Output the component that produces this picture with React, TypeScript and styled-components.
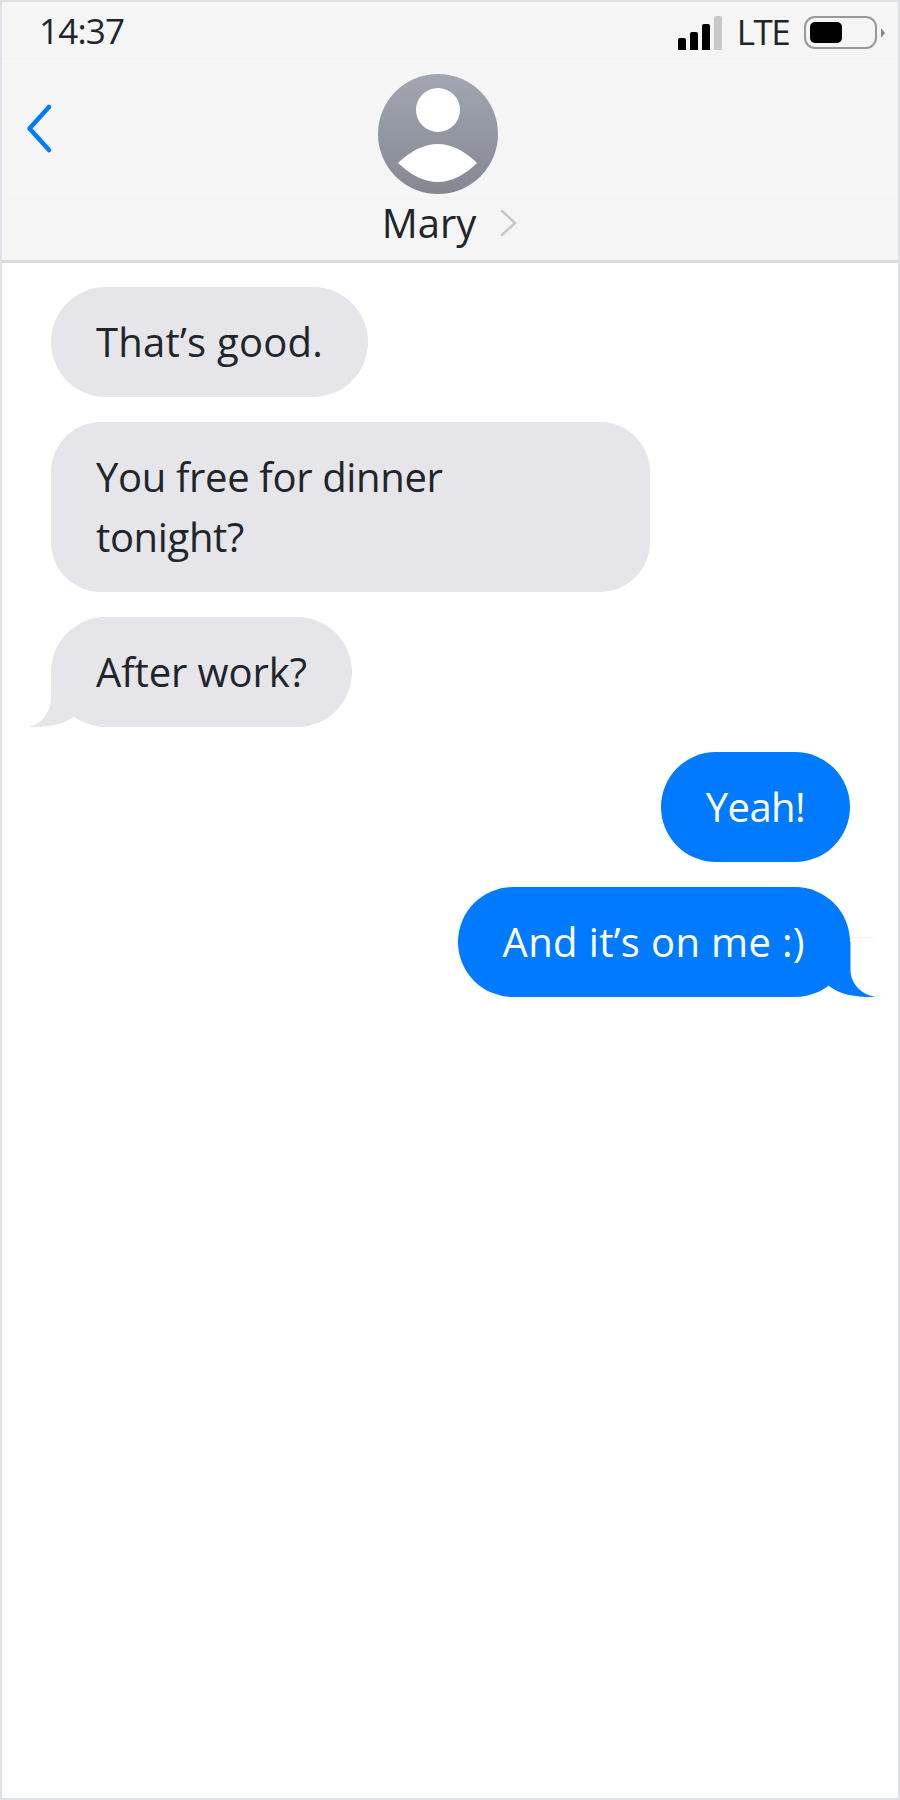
import styled, { createGlobalStyle } from "styled-components";

const GlobalStyle = createGlobalStyle`
  html, body {
    margin: 0;
    padding: 0;
    background: #fff;
  }
  * {
    box-sizing: border-box;
  }
`;

const leftTail =
  "M23 0 L23 25 C23 40 14 52 0 55 C20 55.5 34 53 45.5 45 L60 0 Z";
const rightTail =
  "M25.5 0 L25.5 28 C25.5 42 14 53 0 55 C18 55.5 36 53 47 44 L60 0 Z";

const Phone = styled.div`
  width: 900px;
  height: 1800px;
  border: 2px solid #dee2e6;
  background: #fff;
  font-family: "Open Sans", "Noto Sans", sans-serif;
  color: #212529;
  overflow: hidden;
`;

const Header = styled.header`
  background: #f5f5f5;
  border-bottom: 3px solid #d9d9d9;
`;

const StatusBar = styled.div`
  height: 60px;
  padding: 0 13px 2px 37px;
  display: flex;
  align-items: center;
  justify-content: space-between;
  border-bottom: 1px solid #f8f8f8;
`;

const StatusText = styled.span`
  font-size: 35px;
  line-height: 58px;
  letter-spacing: -0.8px;
`;

const NetworkLabel = styled(StatusText)`
  letter-spacing: -1.6px;
`;

const StatusRight = styled.div`
  display: flex;
  align-items: center;
  padding-top: 2px;
`;

const Signal = styled.div`
  display: flex;
  align-items: flex-end;
  gap: 4.5px;
  height: 34px;
  margin: 2px 15px 0 0;
`;

const SignalBar = styled.div<{ $h: number; $off?: boolean }>`
  width: 7.5px;
  height: ${(p) => p.$h}px;
  background: ${(p) => (p.$off ? "#c8c8c8" : "#000")};
  border-radius: 2px 2px 0 0;
`;

const Battery = styled.div`
  width: 73px;
  height: 33px;
  margin: 2px 0 0 15px;
  padding: 4px;
  border: 2px solid #999;
  border-radius: 11px;
`;

const BatteryLevel = styled.div`
  width: 32px;
  height: 21px;
  background: #000;
  border-radius: 5px;
`;

const BatteryNub = styled.div`
  width: 0;
  height: 0;
  margin: 2px 0 0 4px;
  border-top: 5px solid transparent;
  border-bottom: 5px solid transparent;
  border-left: 4px solid #888;
`;

const NavBar = styled.div`
  position: relative;
  height: 132px;
  display: flex;
  justify-content: center;
  padding-top: 12px;
  border-bottom: 1px solid #f8f8f8;
`;

const BackButton = styled.svg`
  position: absolute;
  left: 22px;
  top: 41px;
`;

const Avatar = styled.svg`
  margin-right: 24px;
`;

const NameRow = styled.div`
  height: 66px;
  padding-bottom: 8px;
  display: flex;
  align-items: center;
  justify-content: center;
  gap: 24px;
`;

const Name = styled.span`
  font-size: 40px;
  line-height: 58px;
`;

const Thread = styled.main`
  display: flex;
  flex-direction: column;
  align-items: flex-start;
  gap: 25px;
  padding: 24px 48px 0 49px;
`;

const Bubble = styled.div<{
  $mine?: boolean;
  $tail?: boolean;
  $track?: number;
  $full?: boolean;
}>`
  position: relative;
  max-width: 600px;
  ${(p) => (p.$full ? "width: 599px;" : "")}
  padding: 25px 45px;
  font-size: 40px;
  line-height: 60px;
  letter-spacing: ${(p) => p.$track ?? 0}px;
  border-radius: ${(p) => (p.$full ? 50 : 55)}px;
  align-self: ${(p) => (p.$mine ? "flex-end" : "flex-start")};
  background: ${(p) => (p.$mine ? "#007bff" : "#e5e5ea")};
  color: ${(p) => (p.$mine ? "#fff" : "#212529")};

  ${(p) =>
    p.$tail &&
    `
    &::after {
      content: "";
      position: absolute;
      bottom: 0;
      width: 70px;
      height: 55px;
      background: inherit;
      ${p.$mine ? "right: -25.5px;" : "left: -23px;"}
      clip-path: path("${p.$mine ? rightTail : leftTail}");
      ${p.$mine ? "transform: scaleX(-1);" : ""}
    }
  `}

  ${(p) =>
    p.$mine &&
    p.$tail &&
    `
    &::before {
      content: "";
      position: absolute;
      top: 50px;
      left: 100%;
      width: 24px;
      height: 1px;
      background: #f6f6f6;
    }
  `}
`;

const App = () => {
  return (
    <>
      <GlobalStyle />
      <Phone>
        <Header>
          <StatusBar>
            <StatusText>14:37</StatusText>
            <StatusRight>
              <Signal>
                <SignalBar $h={12} />
                <SignalBar $h={18} />
                <SignalBar $h={26} />
                <SignalBar $h={34} $off />
              </Signal>
              <NetworkLabel>LTE</NetworkLabel>
              <Battery>
                <BatteryLevel />
              </Battery>
              <BatteryNub />
            </StatusRight>
          </StatusBar>
          <NavBar>
            <BackButton width="32" height="52" viewBox="0 0 32 52">
              <path
                d="M25 4 L5.5 25.5 L25 47"
                fill="none"
                stroke="#007bff"
                strokeWidth="4.5"
                strokeLinecap="round"
                strokeLinejoin="round"
              />
            </BackButton>
            <Avatar width="120" height="120" viewBox="0 0 120 120">
              <defs>
                <linearGradient id="avatarFill" x1="0" y1="0" x2="0" y2="1">
                  <stop offset="0" stopColor="#a2a6b2" />
                  <stop offset="1" stopColor="#858892" />
                </linearGradient>
              </defs>
              <circle cx="60" cy="60" r="60" fill="url(#avatarFill)" />
              <circle cx="60" cy="36" r="22" fill="#fff" />
              <path d="M20 89 Q60 51 99 89 Q60 127 20 89 Z" fill="#fff" />
            </Avatar>
          </NavBar>
          <NameRow>
            <Name>Mary</Name>
            <svg width="18" height="28" viewBox="0 0 18 28">
              <path
                d="M2 2 L15 14 L2 26"
                fill="none"
                stroke="#c7c7c7"
                strokeWidth="2.5"
                strokeLinecap="round"
              />
            </svg>
          </NameRow>
        </Header>
        <Thread>
          <Bubble $track={0.25}>That’s good.</Bubble>
          <Bubble $full $track={-0.35}>
            You free for dinner
            <br />
            tonight?
          </Bubble>
          <Bubble $tail $track={-0.1}>
            After work?
          </Bubble>
          <Bubble $mine $track={-0.6}>
            Yeah!
          </Bubble>
          <Bubble $mine $tail $track={0.35}>
            And it’s on me :)
          </Bubble>
        </Thread>
      </Phone>
    </>
  );
};

export default App;
